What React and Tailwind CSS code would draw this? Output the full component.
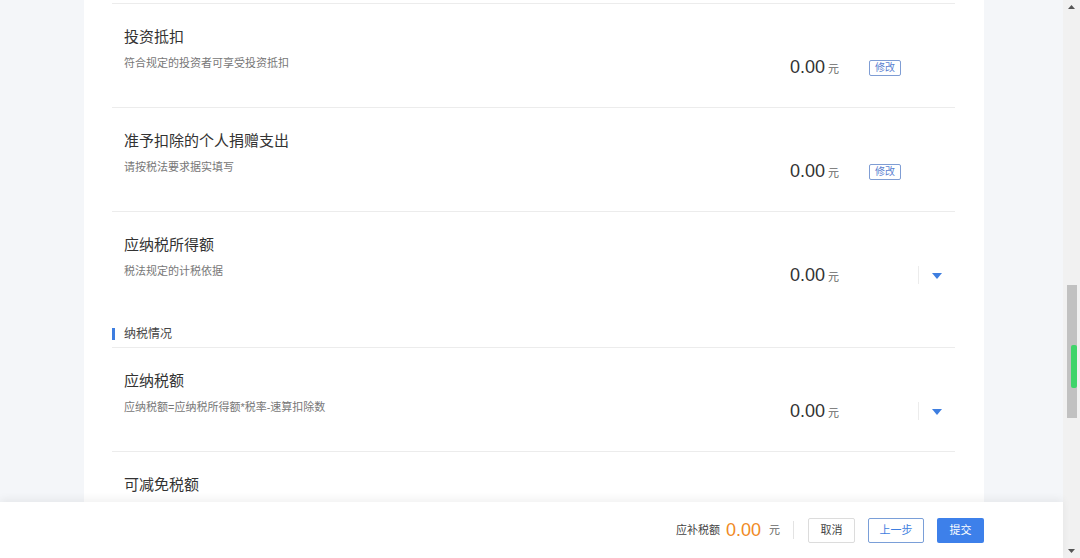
const FONT = { fontFamily: '"Liberation Sans", "Noto Sans CJK SC", sans-serif' };

function Caret() {
  return (
    <svg width="10" height="6" viewBox="0 0 10 6">
      <path d="M0 0 L10 0 L5 6 Z" fill="#3e7ee0" />
    </svg>
  );
}

function Row({ title, desc, action, border = true }) {
  return (
    <div className={`flex h-[104px] ${border ? "border-b border-[#ececec]" : ""}`}>
      <div className="flex-1 pl-3 pt-[23px]">
        <div className="text-[15px] leading-5 text-[#333]">{title}</div>
        <div className="mt-[8px] text-[11px] leading-4 text-[#777]">{desc}</div>
      </div>
      <div className="flex w-[65px] items-baseline pt-[51px]">
        <span className="text-[18px] leading-6 text-[#333]">0.00</span>
        <span className="ml-[3px] text-[11px] text-[#666]">元</span>
      </div>
      <div className="w-[100px] pt-[56px]">
        {action === "edit" ? (
          <div className="ml-[14px] flex h-[16px] w-[32px] items-center justify-center rounded-[2px] border border-[#7f9dd4] text-[10px] leading-none text-[#5b7fd0]">
            修改
          </div>
        ) : (
          <div className="-mt-[2px] flex items-center">
            <div className="ml-[63px] h-[18px] w-px bg-[#ececec]" />
            <div className="ml-[13px] pt-px">
              <Caret />
            </div>
          </div>
        )}
      </div>
    </div>
  );
}

export default function App() {
  return (
    <div className="flex h-[558px] w-[1080px] overflow-hidden bg-[#f4f6f9]" style={FONT}>
      <div className="flex flex-1 flex-col">
        <div className="flex-1 overflow-hidden">
          <div className="ml-[84px] h-full w-[900px] bg-white pl-[28px] pr-[29px]">
            <div className="h-[4px] border-b border-[#ececec]" />
            <Row title="投资抵扣" desc="符合规定的投资者可享受投资抵扣" action="edit" />
            <Row title="准予扣除的个人捐赠支出" desc="请按税法要求据实填写" action="edit" />
            <Row title="应纳税所得额" desc="税法规定的计税依据" action="caret" border={false} />
            <div className="flex h-[32px] items-center border-b border-[#ececec] pt-[4px]">
              <div className="h-[12px] w-[3px] bg-[#3e7ee0]" />
              <span className="ml-[9px] text-[12px] text-[#444]">纳税情况</span>
            </div>
            <Row title="应纳税额" desc="应纳税额=应纳税所得额*税率-速算扣除数" action="caret" />
            <div className="pl-3 pt-[23px] text-[15px] leading-5 text-[#333]">可减免税额</div>
          </div>
        </div>
        <div className="relative flex h-[56px] items-center justify-end bg-white pr-[79px] shadow-[0_-3px_8px_rgba(0,0,0,0.06)]">
          <span className="text-[11px] text-[#444]">应补税额</span>
          <span className="ml-[6px] text-[18px] leading-6 text-[#f08a24]">0.00</span>
          <span className="ml-[8px] text-[11px] text-[#666]">元</span>
          <div className="ml-[13px] h-[18px] w-px bg-[#e3e3e3]" />
          <button className="ml-[14px] h-[25px] w-[47px] rounded-[2px] border border-[#dcdcdc] text-[11px] text-[#444]">
            取消
          </button>
          <button className="ml-[13px] h-[25px] w-[56px] rounded-[2px] border border-[#7a9fd8] text-[11px] text-[#3e7ee0]">
            上一步
          </button>
          <button className="ml-[13px] h-[25px] w-[47px] rounded-[2px] bg-[#3d80ea] text-[11px] text-white">
            提交
          </button>
        </div>
      </div>
      <div className="flex w-[17px] flex-col items-center bg-[#f1f1f1]">
        <svg className="mt-[5px]" width="7" height="4" viewBox="0 0 7 4">
          <path d="M0 4 L7 4 L3.5 0 Z" fill="#555" />
        </svg>
        <div className="relative ml-px mt-[276px] h-[133px] w-[10px] bg-[#c1c1c1]">
          <div className="absolute left-[4px] top-[60px] h-[43px] w-[6px] rounded-[2px] bg-[#3fd46a]" />
        </div>
        <div className="flex-1" />
        <svg className="mb-[5px]" width="7" height="4" viewBox="0 0 7 4">
          <path d="M0 0 L7 0 L3.5 4 Z" fill="#555" />
        </svg>
      </div>
    </div>
  );
}
